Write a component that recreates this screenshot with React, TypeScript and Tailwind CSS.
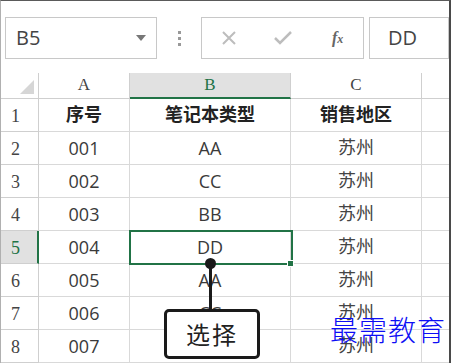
import React from "react";

const rows = [
  ["序号", "笔记本类型", "销售地区"],
  ["001", "AA", "苏州"],
  ["002", "CC", "苏州"],
  ["003", "BB", "苏州"],
  ["004", "DD", "苏州"],
  ["005", "AA", "苏州"],
  ["006", "CC", "苏州"],
  ["007", "AA", "苏州"],
];

const sans = { fontFamily: '"Open Sans", "Liberation Sans", "Noto Sans CJK SC", sans-serif' };
const serif = { fontFamily: '"Liberation Serif", "DejaVu Serif", serif' };
const cjk = { fontFamily: '"Liberation Sans", "Noto Sans CJK SC", sans-serif' };

export default function App() {
  return (
    <div className="relative w-[451px] h-[363px] overflow-hidden bg-white border-t border-t-[#5a5a5a] border-l border-l-[#b0b0b0] border-r-2 border-r-[#4a4a4a]">
      {/* formula bar */}
      <div className="h-[72px] flex items-start pt-[16px] pl-[4px]">
        <div className="w-[152px] h-[42px] border border-[#c8c8c8] flex items-center justify-between pl-[10px] pr-[10px]">
          <span className="text-[20px] text-[#444]" style={sans}>B5</span>
          <svg width="10" height="6" viewBox="0 0 10 6"><path d="M0 0 L10 0 L5 6 Z" fill="#777" /></svg>
        </div>
        <div className="w-[44px] h-[42px] flex flex-col items-center justify-center gap-[3px]">
          <div className="w-[3px] h-[3px] bg-[#999]" />
          <div className="w-[3px] h-[3px] bg-[#999]" />
          <div className="w-[3px] h-[3px] bg-[#999]" />
        </div>
        <div className="w-[163px] h-[42px] border border-[#c8c8c8] flex items-center">
          <svg className="ml-[20px]" width="14" height="14" viewBox="0 0 14 14"><path d="M1 1 L13 13 M13 1 L1 13" stroke="#bdbdbd" strokeWidth="2" /></svg>
          <svg className="ml-[38px]" width="18" height="14" viewBox="0 0 18 14"><path d="M1 7 L6 12 L17 1" stroke="#bdbdbd" strokeWidth="2.5" fill="none" /></svg>
          <span className="ml-[40px] text-[16px] italic font-bold text-[#666]" style={serif}>f<span className="text-[12px]">x</span></span>
        </div>
        <div className="ml-[5px] flex-1 h-[42px] border border-[#c8c8c8] flex items-center pl-[18px]">
          <span className="text-[20px] text-[#444]" style={sans}>DD</span>
        </div>
      </div>

      {/* grid */}
      <div className="grid grid-cols-[38px_91px_161px_131px_1fr] grid-rows-[26px_repeat(8,33px)]">
        <div className="border-r border-b border-[#cfcfcf] relative">
          <svg className="absolute left-[19px] top-[7px]" width="14" height="14" viewBox="0 0 14 14"><path d="M14 0 L14 14 L0 14 Z" fill="#d6d6d6" /></svg>
        </div>
        <div className="border-r border-b border-[#cfcfcf] flex items-end justify-center pb-[1px] text-[17px] text-[#444]" style={serif}>A</div>
        <div className="border-r border-[#cfcfcf] border-b-2 border-b-[#217346] bg-[#e1e1e1] flex items-end justify-center text-[17px] text-[#217346]" style={serif}>B</div>
        <div className="border-r border-b border-[#cfcfcf] flex items-end justify-center pb-[1px] text-[17px] text-[#444]" style={serif}>C</div>
        <div className="border-b border-[#cfcfcf]" />

        {rows.map((r, i) => {
          const sel = i === 4;
          return (
            <React.Fragment key={i}>
              <div
                className={
                  sel
                    ? "bg-[#e1e1e1] border-r-2 border-r-[#217346] border-b border-b-[#cfcfcf] flex items-end pl-[10px] pb-[1px] text-[18px] text-[#217346]"
                    : "border-r border-b border-[#cfcfcf] flex items-end pl-[10px] pb-[1px] text-[18px] text-[#444]"
                }
                style={serif}
              >
                {i + 1}
              </div>
              {r.map((c, j) => (
                <div
                  key={j}
                  className={
                    "border-r border-b border-[#d9d9d9] flex items-center justify-center " +
                    (i === 0
                      ? "text-[18px] font-bold text-[#222]"
                      : j === 2
                      ? "text-[18px] text-[#444]"
                      : "text-[18px] text-[#3a3a3a] font-medium")
                  }
                  style={j === 2 || i === 0 ? cjk : sans}
                >
                  {c}
                </div>
              ))}
              <div className="border-b border-[#d9d9d9]" />
            </React.Fragment>
          );
        })}
      </div>

      {/* selection box */}
      <div className="absolute left-[128px] top-[229px] w-[164px] h-[35px] border-2 border-[#217346] pointer-events-none" />
      <div className="absolute left-[286px] top-[259px] w-[7px] h-[7px] bg-[#217346] border border-white" />

      {/* callout */}
      <div className="absolute left-[204px] top-[257px] w-[11px] h-[11px] rounded-full bg-[#1a1a1a]" />
      <div className="absolute left-[208px] top-[263px] w-[3px] h-[46px] bg-[#1a1a1a]" />
      <div className="absolute left-[163px] top-[308px] w-[96px] h-[50px] rounded-[5px] border-[3px] border-[#1a1a1a] bg-white flex items-center justify-center">
        <span className="text-[24px] text-[#222] tracking-[2px]" style={{ fontFamily: '"Noto Sans CJK SC", sans-serif' }}>选择</span>
      </div>

      {/* watermark */}
      <div className="absolute left-[329px] top-[314px] text-[28px] leading-none text-[#0d0df5] tracking-[1px]" style={{ fontFamily: '"Noto Sans CJK SC", sans-serif', fontWeight: 300 }}>
        最需教育
      </div>
    </div>
  );
}
